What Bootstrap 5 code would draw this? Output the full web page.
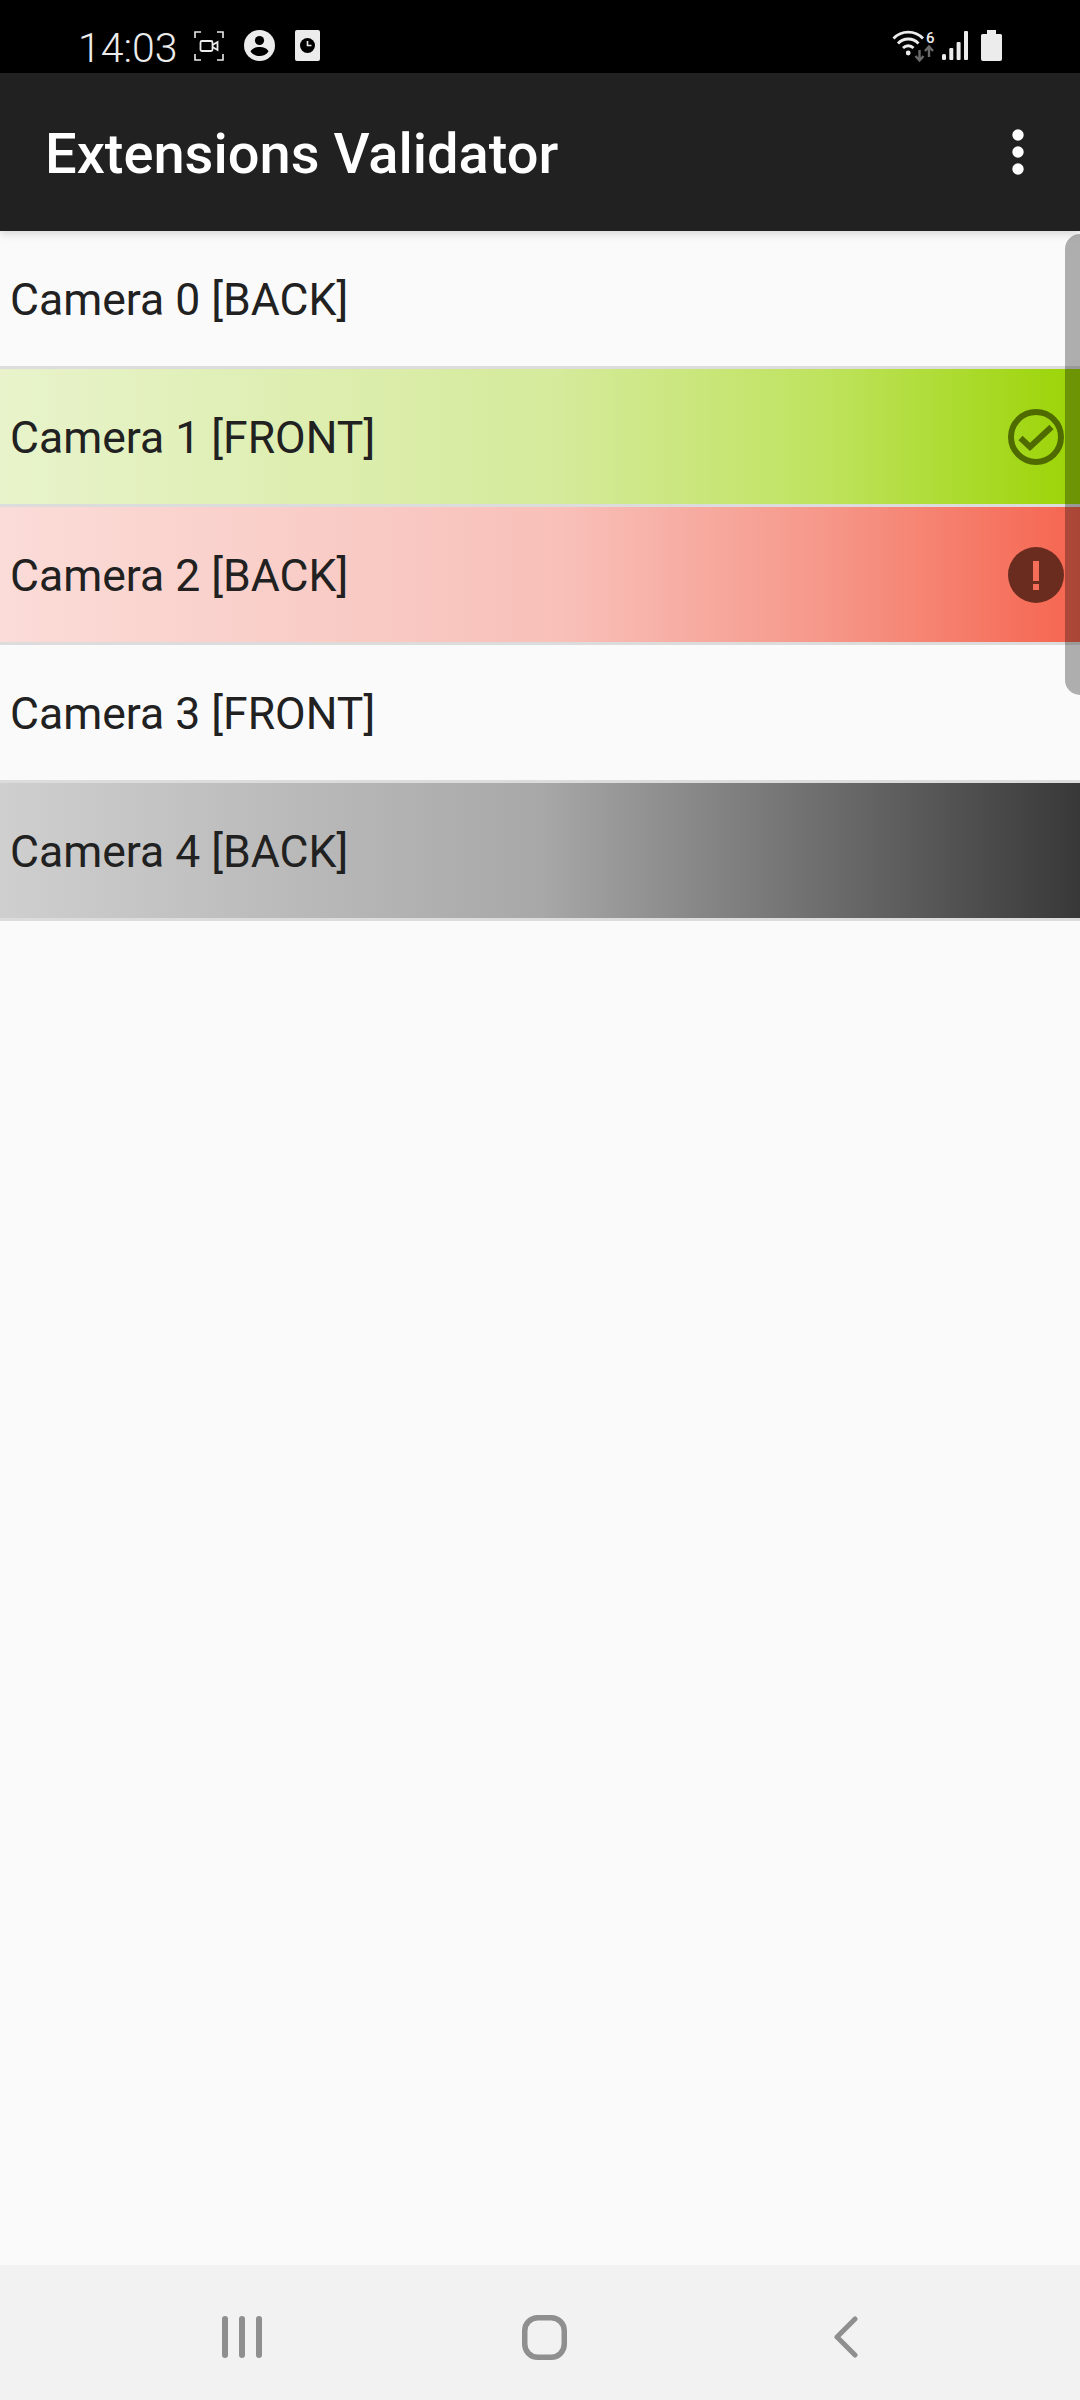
<!DOCTYPE html>
<html lang="en">
<head>
    <meta charset="UTF-8">
    <meta name="viewport" content="width=device-width, initial-scale=1.0">
    <title>Extensions Validator</title>
    <link href="https://cdn.jsdelivr.net/npm/bootstrap@5.3.0/dist/css/bootstrap.min.css" rel="stylesheet">
    <style>
        body {
            background-color: #fafafa;
            font-family: Roboto, sans-serif;
            height: 2400px;
            overflow: hidden;
        }
        .status-bar {
            height: 73px;
            background-color: #000;
            color: #ececec;
            padding: 18px 78px 0 78px;
        }
        .status-bar .clock {
            font-size: 41px;
            font-weight: 300;
            line-height: 1;
            margin-top: 5px;
        }
        .app-bar {
            height: 158px;
            background-color: #212121;
            color: #fff;
            padding: 0 56px 0 45px;
            position: relative;
            z-index: 1;
            box-shadow: 0 3px 8px rgba(0, 0, 0, .14);
        }
        .app-title {
            font-size: 56px;
            font-weight: 500;
            margin-top: 4px;
        }
        .camera-list {
            position: relative;
        }
        .camera-row {
            position: relative;
            height: 138px;
            padding: 3px 10px 0;
            font-size: 44.5px;
            color: #212121;
            border-bottom: 3px solid #dcdcdc;
        }
        .row-pass {
            background-image: linear-gradient(to right, #e8f3cb, #d5ea9a 52%, #bfe35f 76%, #9bd404);
        }
        .row-fail {
            background-image: linear-gradient(to right, #fbdcd8, #f8c0b9 52%, #f6988a 76%, #f5654f);
        }
        .row-none {
            background-image: linear-gradient(to right, #cfcfcf, #a8a8a8 50%, #383838);
        }
        .row-icon {
            position: absolute;
            right: 16px;
            top: 50%;
            transform: translateY(-50%);
        }
        .scroll-thumb {
            position: absolute;
            top: 3px;
            right: 0;
            width: 15px;
            height: 461px;
            background-color: rgba(0, 0, 0, .3);
            border-radius: 15px 0 0 15px;
        }
        .signal-icon {
            margin-left: 6px;
        }
        .battery-icon {
            margin-left: 13px;
        }
        .nav-bar {
            height: 135px;
            background-color: #f2f2f2;
            padding: 9px 0 0 222px;
        }
        .nav-home {
            margin-left: 260px;
        }
        .nav-back {
            margin-left: 267px;
        }
    </style>
</head>
<body class="d-flex flex-column">
    <!-- Barra de estado -->
    <div class="status-bar d-flex align-items-center justify-content-between">
        <div class="d-flex align-items-center gap-3">
            <span class="clock">14:03</span>
            <svg width="30" height="30" viewBox="0 0 30 30" fill="none" stroke="#ececec">
                <path d="M1 7V1H7M23 1H29V7M1 23V29H7M23 29H29V23" stroke-width="1.6"/>
                <rect x="6.5" y="10" width="12" height="10" rx="1.5" stroke-width="1.8"/>
                <path d="M18.5 14L23.5 11V19L18.5 16" stroke-width="1.8"/>
            </svg>
            <svg class="ms-1" width="31" height="31" viewBox="0 0 31 31">
                <circle cx="15.5" cy="15.5" r="15.5" fill="#ececec"/>
                <circle cx="15.5" cy="10.5" r="4.6" fill="#000"/>
                <path d="M6.5 21.5C8 18 12 17 15.5 17S23 18 24.5 21.5C22.5 24.5 19 26 15.5 26S8.5 24.5 6.5 21.5Z" fill="#000"/>
            </svg>
            <svg class="ms-1" width="25" height="31" viewBox="0 0 25 31">
                <rect width="25" height="31" rx="2" fill="#ececec"/>
                <circle cx="12.5" cy="15.5" r="7.5" fill="#000"/>
                <path d="M12.5 11V15.5H16.5" stroke="#ececec" stroke-width="1.6" fill="none"/>
            </svg>
        </div>
        <div class="d-flex align-items-center">
            <svg width="44" height="33" viewBox="0 0 44 33" fill="none">
                <path d="M1.5 9.5C9.5 1 23 1 31 9.5M6 14.5C11.5 8.5 21 8.5 26.5 14.5M11 19C14 16 18.5 16 21.5 19" stroke="#ececec" stroke-width="2.8"/>
                <circle cx="16.2" cy="24" r="2.4" fill="#ececec"/>
                <text x="34" y="13.5" font-family="Roboto" font-size="15" font-weight="500" fill="#ececec">6</text>
                <path d="M27.5 21V31M23.5 27L27.5 31.5L31.5 27" stroke="#6a6a6a" stroke-width="2.4"/>
                <path d="M37 28V18M33 22L37 17.5L41 22" stroke="#6a6a6a" stroke-width="2.4"/>
            </svg>
            <svg class="signal-icon" width="26" height="29" viewBox="0 0 26 29">
                <g fill="#ececec">
                    <rect x="0" y="23" width="4" height="6" rx="1.5"/>
                    <rect x="7.3" y="17" width="4" height="12" rx="1"/>
                    <rect x="14.6" y="11" width="4" height="18" rx="1"/>
                    <rect x="22" y="0" width="4" height="29" rx="1"/>
                </g>
            </svg>
            <svg class="battery-icon" width="21" height="31" viewBox="0 0 21 31">
                <path d="M6 0H15V4H19.5Q21 4 21 5.5V29Q21 31 19 31H2Q0 31 0 29V5.5Q0 4 1.5 4H6Z" fill="#ececec"/>
            </svg>
        </div>
    </div>

    <!-- Barra de la app -->
    <nav class="app-bar d-flex align-items-center justify-content-between">
        <span class="app-title">Extensions Validator</span>
        <svg width="12" height="46" viewBox="0 0 12 46" fill="#fff">
            <circle cx="6" cy="6" r="5.7"/>
            <circle cx="6" cy="23" r="5.7"/>
            <circle cx="6" cy="40" r="5.7"/>
        </svg>
    </nav>

    <!-- Lista de cámaras -->
    <div class="camera-list flex-grow-1">
        <div class="camera-row d-flex align-items-center">Camera 0 [BACK]</div>
        <div class="camera-row row-pass d-flex align-items-center">Camera 1 [FRONT]
            <svg class="row-icon" width="56" height="56" viewBox="0 0 56 56" fill="none" stroke="#4f6b00" stroke-width="6">
                <circle cx="28" cy="28" r="25"/>
                <path d="M12.5 29L22 38L43.5 18"/>
            </svg>
        </div>
        <div class="camera-row row-fail d-flex align-items-center">Camera 2 [BACK]
            <svg class="row-icon" width="56" height="56" viewBox="0 0 56 56">
                <path fill="#6b2c20" fill-rule="evenodd" d="M28 0A28 28 0 1 1 28 56A28 28 0 1 1 28 0ZM25 14V34H31V14ZM25 37V43H31V37Z"/>
            </svg>
        </div>
        <div class="camera-row d-flex align-items-center">Camera 3 [FRONT]</div>
        <div class="camera-row row-none d-flex align-items-center">Camera 4 [BACK]</div>
        <div class="scroll-thumb"></div>
    </div>

    <!-- Barra de navegación -->
    <div class="nav-bar d-flex align-items-center">
        <svg width="40" height="42" viewBox="0 0 40 42" stroke="#8f8f8f" stroke-width="6" stroke-linecap="round">
            <path d="M3 3V39M20 3V39M37 3V39"/>
        </svg>
        <svg class="nav-home" width="45" height="45" viewBox="0 0 45 45" fill="none" stroke="#8f8f8f" stroke-width="5.5">
            <rect x="2.75" y="2.75" width="39.5" height="39.5" rx="13"/>
        </svg>
        <svg class="nav-back" width="24" height="42" viewBox="0 0 24 42" fill="none" stroke="#8f8f8f" stroke-width="5" stroke-linecap="round" stroke-linejoin="round">
            <path d="M21 3L3 21L21 39"/>
        </svg>
    </div>

    <script src="https://cdn.jsdelivr.net/npm/bootstrap@5.3.0/dist/js/bootstrap.bundle.min.js"></script>
</body>
</html>
